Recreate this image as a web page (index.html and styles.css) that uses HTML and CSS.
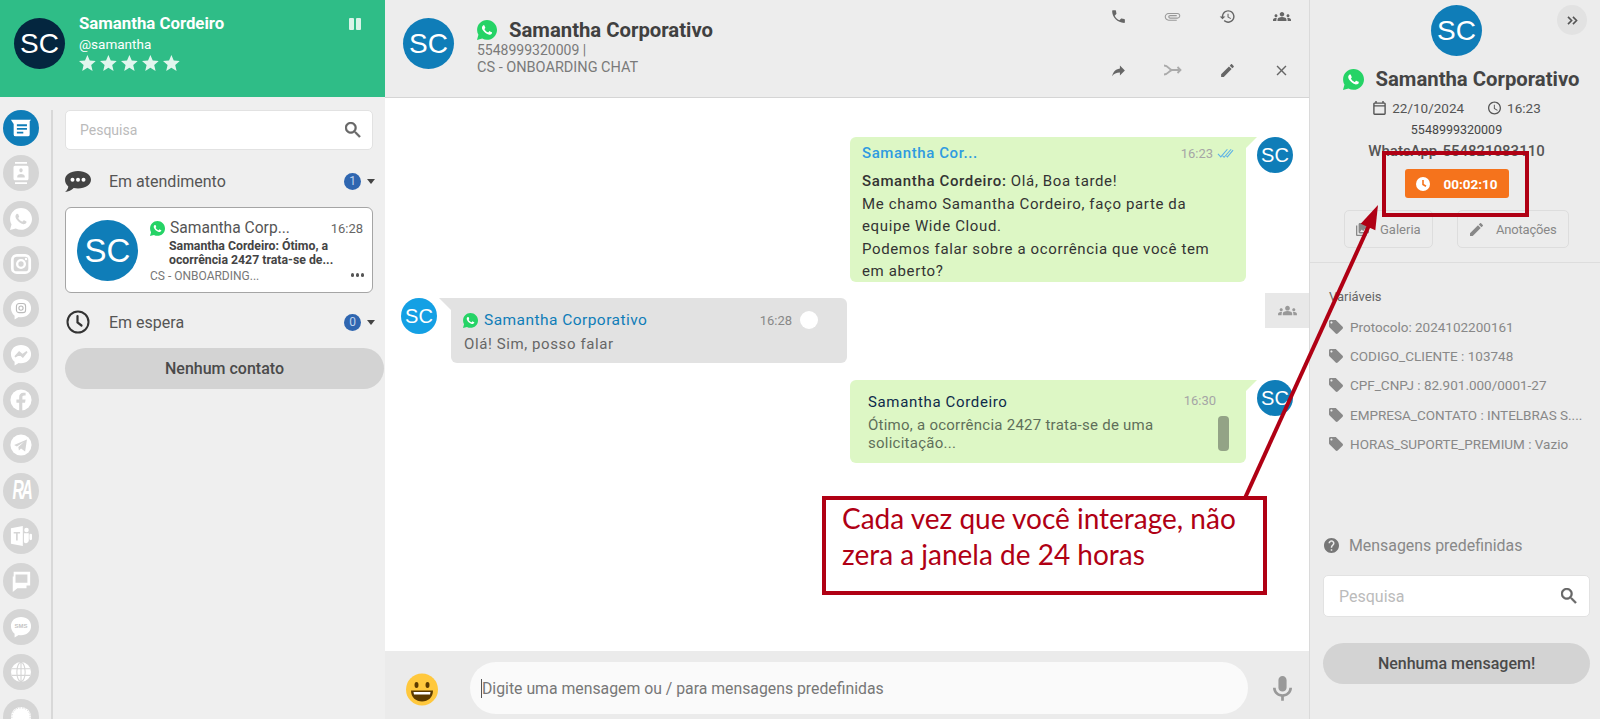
FILE: index.html
```html
<!DOCTYPE html>
<html lang="pt-BR">
<head>
<meta charset="utf-8">
<title>Atendimento</title>
<link rel="stylesheet" href="styles.css">
</head>
<body>
<svg class="defs" xmlns="http://www.w3.org/2000/svg">
  <symbol id="wa" viewBox="0 32 448 448">
    <path fill="#25D366" d="M224 32C101.600 32 2 131.600 2 254c0 39.100 10.200 77.300 29.600 111L0 480l117.700-30.900c32.400 17.700 68.900 27 106.100 27C346 476 448 376 448 254S346 32 224 32z"/>
    <path fill="#fff" d="M325.100 300.500c-5.500-2.800-32.800-16.200-37.900-18-5.100-1.900-8.800-2.800-12.500 2.800-3.700 5.600-14.300 18-17.600 21.800-3.200 3.700-6.500 4.200-12 1.400-32.600-16.300-54-29.100-75.500-66-5.700-9.800 5.700-9.100 16.300-30.300 1.800-3.700.9-6.900-.5-9.700-1.400-2.800-12.500-30.100-17.100-41.200-4.500-10.800-9.100-9.300-12.500-9.500-3.200-.2-6.900-.2-10.600-.2-3.700 0-9.700 1.400-14.800 6.900-5.100 5.600-19.400 19-19.400 46.300 0 27.300 19.900 53.700 22.600 57.400 2.800 3.700 39.100 59.700 94.800 83.800 35.200 15.200 49 16.500 66.600 13.900 10.700-1.600 32.800-13.400 37.400-26.400 4.600-13 4.600-24.100 3.200-26.400-1.300-2.500-5-3.900-10.500-6.600z"/>
  </symbol>
  <symbol id="search" viewBox="3 3 18 18"><path d="M15.500 14h-.79l-.28-.27C15.410 12.590 16 11.110 16 9.500 16 5.910 13.090 3 9.500 3S3 5.910 3 9.500 5.910 16 9.500 16c1.610 0 3.090-.59 4.230-1.570l.27.28v.79l5 4.990L20.490 19l-4.990-5zm-6 0C7.010 14 5 11.990 5 9.500S7.010 5 9.500 5 14 7.010 14 9.500 11.990 14 9.500 14z"/></symbol>
  <symbol id="star" viewBox="2 2 20 19"><path d="M12 17.270L18.180 21l-1.640-7.030L22 9.240l-7.190-.61L12 2 9.190 8.630 2 9.240l5.460 4.730L5.820 21z"/></symbol>
  <symbol id="tag" viewBox="2 2 20 20"><path d="M21.410 11.580l-9-9C12.050 2.220 11.550 2 11 2H4c-1.100 0-2 .9-2 2v7c0 .55.22 1.050.59 1.420l9 9c.36.36.86.58 1.410.58.55 0 1.050-.22 1.410-.59l7-7c.37-.36.59-.86.59-1.410 0-.55-.23-1.060-.59-1.420zM5.500 7C4.670 7 4 6.330 4 5.500S4.670 4 5.500 4 7 4.670 7 5.500 6.330 7 5.500 7z"/></symbol>
  <symbol id="clock" viewBox="2 2 20 20"><path d="M11.990 2C6.470 2 2 6.480 2 12s4.470 10 9.990 10C17.520 22 22 17.520 22 12S17.520 2 11.990 2zM12 20c-4.420 0-8-3.580-8-8s3.580-8 8-8 8 3.580 8 8-3.580 8-8 8zm.5-13H11v6l5.250 3.150.75-1.230-4.500-2.670z"/></symbol>
  <symbol id="groups" viewBox="0 5 24 14"><path d="M12 12.750c1.630 0 3.070.39 4.240.9 1.080.48 1.760 1.560 1.760 2.730V18H6v-1.610c0-1.180.68-2.260 1.760-2.730 1.170-.52 2.610-.91 4.240-.91zM4 13c1.100 0 2-.9 2-2s-.9-2-2-2-2 .9-2 2 .9 2 2 2zm1.130 1.100c-.37-.06-.74-.1-1.130-.1-.99 0-1.930.21-2.780.58C.48 14.900 0 15.620 0 16.430V18h4.500v-1.610c0-.83.23-1.610.63-2.290zM20 13c1.100 0 2-.9 2-2s-.9-2-2-2-2 .9-2 2 .9 2 2 2zm4 3.430c0-.81-.48-1.530-1.220-1.850-.85-.37-1.790-.58-2.780-.58-.39 0-.76.04-1.130.1.4.68.63 1.460.63 2.290V18H24v-1.570zM12 6c1.660 0 3 1.340 3 3s-1.340 3-3 3-3-1.340-3-3 1.340-3 3-3z"/></symbol>
</svg>

<div class="app">
  <aside class="left">
    <header class="me">
      <div class="av av-51 av-navy">SC</div>
      <div class="me-info">
        <div class="me-name">Samantha Cordeiro</div>
        <div class="me-user">@samantha</div>
        <div class="stars">
          <svg class="star"><use href="#star"/></svg><svg class="star"><use href="#star"/></svg><svg class="star"><use href="#star"/></svg><svg class="star"><use href="#star"/></svg><svg class="star"><use href="#star"/></svg>
        </div>
      </div>
      <div class="pause"><span></span><span></span></div>
    </header>
    <div class="left-body">
      <nav class="rail">
        <div class="ch ch-on"><svg class="ic22" viewBox="0 0 24 24"><path fill="#fff" d="M1 3h22l-1.500 1.500V19a2 2 0 0 1-2 2H6a2 2 0 0 1-2-2V7.500z"/><path fill="#0F7DB8" d="M7.500 8h11v2h-11zM7.500 12h11v2h-11zM7.500 16h7v2h-7z"/></svg></div>
        <div class="ch"><svg class="ic-contacts" viewBox="0 0 24 24" preserveAspectRatio="none"><path fill="#fff" d="M20 0H4v2h16V0zM4 24h16v-2H4v2zM20 4H4c-1.100 0-2 .9-2 2v12c0 1.100.9 2 2 2h16c1.100 0 2-.9 2-2V6c0-1.100-.9-2-2-2zm-8 2.750c1.240 0 2.250 1.010 2.250 2.250s-1.010 2.250-2.250 2.250S9.750 10.240 9.750 9 10.760 6.750 12 6.750zM17 17H7v-1.500c0-1.670 3.330-2.500 5-2.500s5 .83 5 2.500V17z"/></svg></div>
        <div class="ch"><svg class="ic22" viewBox="0 32 448 448"><path fill="#fff" d="M224 32C101.600 32 2 131.600 2 254c0 39.100 10.200 77.300 29.600 111L0 480l117.700-30.900c32.400 17.700 68.900 27 106.100 27C346 476 448 376 448 254S346 32 224 32z"/><path fill="#d5d5d5" d="M325.100 300.500c-5.500-2.800-32.800-16.200-37.900-18-5.100-1.900-8.800-2.800-12.500 2.800-3.700 5.600-14.300 18-17.600 21.800-3.200 3.700-6.500 4.200-12 1.400-32.600-16.300-54-29.100-75.500-66-5.700-9.800 5.700-9.100 16.300-30.300 1.800-3.700.9-6.900-.5-9.700-1.400-2.800-12.500-30.100-17.100-41.200-4.500-10.800-9.100-9.300-12.500-9.500-3.200-.2-6.900-.2-10.600-.2-3.700 0-9.700 1.400-14.800 6.900-5.100 5.600-19.400 19-19.400 46.300 0 27.300 19.900 53.700 22.600 57.400 2.800 3.700 39.100 59.700 94.800 83.800 35.200 15.200 49 16.500 66.600 13.900 10.700-1.600 32.800-13.400 37.400-26.400 4.600-13 4.600-24.100 3.200-26.400-1.300-2.500-5-3.900-10.500-6.600z"/></svg></div>
        <div class="ch"><svg class="ic22" viewBox="0 0 24 24"><rect x="2.500" y="2.500" width="19" height="19" rx="5" fill="none" stroke="#fff" stroke-width="3"/><circle cx="12" cy="12" r="4.200" fill="none" stroke="#fff" stroke-width="2.600"/><circle cx="17.500" cy="6.500" r="1.300" fill="#fff"/></svg></div>
        <div class="ch"><svg class="ic22" viewBox="0 0 24 24"><path fill="#fff" d="M12 1c6.600 0 11 4.200 11 10s-4.400 10-11 10c-.9 0-1.700-.1-2.500-.2L5 23.500v-4.200C2.500 17.400 1 14.500 1 11 1 5.200 5.400 1 12 1z"/><rect x="7" y="6" width="10" height="10" rx="3" fill="none" stroke="#bbb" stroke-width="1.200"/><circle cx="12" cy="11" r="2.300" fill="none" stroke="#bbb" stroke-width="1.200"/></svg></div>
        <div class="ch"><svg class="ic22" viewBox="0 0 24 24"><path fill="#fff" d="M12 1c6.600 0 11 4.200 11 10s-4.400 10-11 10c-.9 0-1.700-.1-2.500-.2L5 23.500v-4.200C2.500 17.400 1 14.500 1 11 1 5.200 5.400 1 12 1z"/><path fill="none" stroke="#d5d5d5" stroke-width="1.800" d="M5.500 14l4.500-5 3.500 3 5-3.500-4.500 5.500-3.500-3z"/></svg></div>
        <div class="ch"><svg class="ic22" viewBox="0 0 24 24"><circle cx="12" cy="12" r="11.500" fill="#fff"/><path fill="#d5d5d5" d="M10 24v-9H7v-3.600h3V8.800C10 5.700 11.800 4 14.600 4c1.300 0 2.400.1 2.400.1v3.100h-1.600c-1.400 0-1.900.9-1.900 1.800v2.400H17l-.6 3.600h-3v9z"/></svg></div>
        <div class="ch"><svg class="ic22" viewBox="0 0 24 24"><circle cx="12" cy="12" r="11.500" fill="#fff"/><path fill="#d5d5d5" d="M4.500 12l14-6-2 13-4.500-3.200-2.300 2.200-.6-3.800 6.400-5.700-8 5z"/></svg></div>
        <div class="ch"><span class="ra">RA</span></div>
        <div class="ch"><svg class="ic22" viewBox="0 0 24 24"><path fill="#fff" d="M1 3.500L14 1v22L1 20.500z"/><path fill="#d5d5d5" d="M4 7.500h7v1.800H8.400V17H6.600V9.300H4z"/><circle cx="18" cy="5.500" r="2.500" fill="#fff"/><path fill="#fff" d="M15.200 9h5.300v8a3 3 0 0 1-5.300 1.700z"/><rect x="21.200" y="9.500" width="2.800" height="7" rx="1.400" fill="#fff"/></svg></div>
        <div class="ch"><svg class="ic22" viewBox="0 0 24 24"><path fill="#fff" d="M4 2h18v15h-4v3H8l-5 4V7h1z"/><path fill="#d5d5d5" d="M6 5h13v9H6z"/></svg></div>
        <div class="ch"><svg class="ic22" viewBox="0 0 24 24"><path fill="#fff" d="M12 1c6.600 0 11 4.200 11 10s-4.400 10-11 10c-.9 0-1.700-.1-2.500-.2L5 23.500v-4.200C2.500 17.400 1 14.500 1 11 1 5.200 5.400 1 12 1z"/><text class="sms" x="12" y="13.500" text-anchor="middle">SMS</text></svg></div>
        <div class="ch"><svg class="ic20" viewBox="0 0 24 24"><circle cx="12" cy="12" r="12" fill="#fff"/><g fill="none" stroke="#d5d5d5" stroke-width="1.300"><ellipse cx="12" cy="12" rx="5" ry="11.500"/><path d="M1 8h22M1 16h22M12 0v24"/></g></svg></div>
        <div class="ch"><svg class="ic22" viewBox="0 0 24 24"><circle cx="12" cy="12" r="11" fill="#fff"/><circle cx="12" cy="12" r="10" fill="none" stroke="#d5d5d5" stroke-width="1" stroke-dasharray="1.500 1.500"/></svg></div>
      </nav>
      <div class="list">
        <div class="search search-l"><span class="ph">Pesquisa</span><svg class="ic-search"><use href="#search"/></svg></div>
        <div class="sect sect-a">
          <svg class="sect-ic" viewBox="0 0 26 21"><path fill="#444" d="M13 0c7.200 0 13 3.900 13 8.800s-5.800 8.800-13 8.800c-1.500 0-3-.2-4.300-.5C6.500 19.300 3.500 20.700 0 21c1.800-1.500 3-3.300 3.300-5.600C1.200 13.900 0 11.500 0 8.800 0 3.900 5.800 0 13 0z"/><circle cx="7.500" cy="8.800" r="2" fill="#fff"/><circle cx="13" cy="8.800" r="2" fill="#fff"/><circle cx="18.500" cy="8.800" r="2" fill="#fff"/></svg>
          <span class="sect-t">Em atendimento</span>
          <span class="badge">1</span><span class="caret"></span>
        </div>
        <article class="card">
          <div class="av av-61 av-blue">SC</div>
          <div class="card-b">
            <div class="card-top">
              <svg class="wa15"><use href="#wa"/></svg>
              <span class="card-name">Samantha Corp...</span>
              <span class="card-time">16:28</span>
            </div>
            <div class="card-msg">Samantha Cordeiro: Ótimo, a<br>ocorrência 2427 trata-se de...</div>
            <div class="card-bot"><span>CS - ONBOARDING...</span><span class="dots"><i></i><i></i><i></i></span></div>
          </div>
        </article>
        <div class="sect sect-b">
          <svg class="sect-clock" viewBox="0 0 24 24"><circle cx="12" cy="12" r="10.500" fill="none" stroke="#333" stroke-width="2"/><path fill="none" stroke="#333" stroke-width="2.200" stroke-linecap="round" d="M11.500 6v6.500l4 3"/></svg>
          <span class="sect-t">Em espera</span>
          <span class="badge">0</span><span class="caret"></span>
        </div>
        <div class="empty empty-l">Nenhum contato</div>
      </div>
    </div>
  </aside>

  <main class="chat">
    <header class="chat-head">
      <div class="av av-51 av-blue">SC</div>
      <div class="head-info">
        <div class="head-title"><svg class="wa20"><use href="#wa"/></svg><span>Samantha Corporativo</span></div>
        <div class="head-sub">5548999320009 |<br><span class="head-q">CS - ONBOARDING CHAT</span></div>
      </div>
      <div class="tools">
        <div class="tool"><svg class="tool-ic" viewBox="0 0 24 24"><path d="M6.620 10.790c1.440 2.830 3.760 5.140 6.590 6.590l2.200-2.200c.27-.27.67-.36 1.020-.24 1.120.37 2.330.57 3.570.57.55 0 1 .45 1 1V20c0 .55-.45 1-1 1-9.390 0-17-7.610-17-17 0-.55.45-1 1-1h3.500c.55 0 1 .45 1 1 0 1.250.2 2.450.57 3.570.11.35.03.74-.25 1.020l-2.200 2.200z"/></svg></div>
        <div class="tool"><svg class="tool-ic tool-lt" viewBox="0 0 24 24"><path transform="rotate(90 12 12)" d="M16.500 6v11.500c0 2.210-1.790 4-4 4s-4-1.790-4-4V5c0-1.380 1.120-2.500 2.500-2.500s2.500 1.120 2.500 2.500v10.500c0 .55-.45 1-1 1s-1-.45-1-1V6H10v9.500c0 1.380 1.120 2.500 2.500 2.500s2.500-1.120 2.500-2.500V5c0-2.210-1.790-4-4-4S7 2.790 7 5v12.500c0 3.040 2.460 5.500 5.500 5.500s5.500-2.460 5.500-5.500V6h-1.500z"/></svg></div>
        <div class="tool"><svg class="tool-ic" viewBox="0 0 24 24"><path d="M13 3c-4.970 0-9 4.030-9 9H1l3.890 3.890.07.14L9 12H6c0-3.870 3.130-7 7-7s7 3.130 7 7-3.130 7-7 7c-1.930 0-3.680-.79-4.940-2.060l-1.420 1.420C8.270 19.990 10.510 21 13 21c4.970 0 9-4.030 9-9s-4.030-9-9-9zm-1 5v5l4.280 2.540.72-1.210-3.500-2.080V8H12z"/></svg></div>
        <div class="tool"><svg class="tool-grp"><use href="#groups"/></svg></div>
        <div class="tool"><svg class="tool-ic" viewBox="0 0 24 24"><path d="M14 9V5l7 7-7 7v-4.100c-5 0-8.500 1.600-11 5.100 1-5 4-10 11-11z"/></svg></div>
        <div class="tool"><svg class="tool-merge" viewBox="0 0 24 16"><path fill="none" stroke="#aaa" stroke-width="2.400" d="M0 2c6 0 7 6 11 6h11M0 14c6 0 7-6 11-6M18 4l4 4-4 4"/></svg></div>
        <div class="tool"><svg class="tool-ic" viewBox="0 0 24 24"><path d="M3 17.250V21h3.750L17.810 9.940l-3.750-3.750L3 17.250zM20.710 7.040c.39-.39.39-1.020 0-1.410l-2.340-2.340c-.39-.39-1.020-.39-1.410 0l-1.830 1.830 3.750 3.750 1.830-1.830z"/></svg></div>
        <div class="tool"><svg class="tool-ic" viewBox="0 0 24 24"><path d="M19 6.410L17.590 5 12 10.590 6.410 5 5 6.410 10.590 12 5 17.590 6.410 19 12 13.410 17.590 19 19 17.590 13.410 12z"/></svg></div>
      </div>
    </header>

    <section class="msgs">
      <div class="row row-out row-1">
        <div class="bub bub-out bub-long">
          <div class="bub-top">
            <span class="from-a">Samantha Cor...</span>
            <span class="time-r"><span class="time">16:23</span><svg class="ticks" viewBox="0 0 18 11"><path fill="none" stroke="#5FB3E6" stroke-width="1.200" d="M1 6l3 3 7-8M6 8l1.500 1.500L15 1M10 8l1 1 6-7"/></svg></span>
          </div>
          <div class="bub-text"><b>Samantha Cordeiro:</b> Olá, Boa tarde!<br>Me chamo Samantha Cordeiro, faço parte da<br>equipe Wide Cloud.<br>Podemos falar sobre a ocorrência que você tem<br>em aberto?</div>
        </div>
        <div class="av av-36 av-blue">SC</div>
      </div>
      <div class="row row-in row-2">
        <div class="av av-36 av-sky">SC</div>
        <div class="bub bub-in">
          <div class="bub-top-in">
            <svg class="wa15"><use href="#wa"/></svg>
            <span class="from-b">Samantha Corporativo</span>
            <span class="time time-in">16:28</span>
            <span class="tick-circle"></span>
          </div>
          <div class="in-text">Olá! Sim, posso falar</div>
        </div>
      </div>
      <div class="row row-out row-3">
        <div class="bub bub-out bub-reply">
          <div class="reply-main">
            <div class="reply-top"><span class="from-c">Samantha Cordeiro</span></div>
            <div class="reply-text">Ótimo, a ocorrência 2427 trata-se de uma solicitação...</div>
          </div>
          <div class="reply-side"><span class="time reply-time">16:30</span><span class="reply-bar"></span></div>
        </div>
        <div class="av av-36 av-blue">SC</div>
      </div>
      <div class="side-tab"><svg class="side-grp"><use href="#groups"/></svg></div>
    </section>

    <footer class="composer">
      <svg class="emoji" viewBox="0 0 32 32"><circle cx="16" cy="16" r="16" fill="#FFC83D"/><ellipse cx="10.500" cy="11.500" rx="2" ry="3" fill="#5B3A00"/><ellipse cx="21.500" cy="11.500" rx="2" ry="3" fill="#5B3A00"/><path fill="#5B3A00" d="M5 17h22c0 7-5 11-11 11S5 24 5 17z"/><path fill="#fff" d="M7.500 18.500h17l-.5 2.500H8z"/></svg>
      <div class="composer-input"><span class="cursor"></span><span class="composer-ph">Digite uma mensagem ou / para mensagens predefinidas</span></div>
      <svg class="mic" viewBox="5 2 14 20" preserveAspectRatio="none"><path d="M12 14c1.660 0 3-1.340 3-3V5c0-1.660-1.340-3-3-3S9 3.340 9 5v6c0 1.660 1.340 3 3 3zm5-3c0 2.760-2.240 5-5 5s-5-2.240-5-5H5c0 3.530 2.610 6.430 6 6.920V21h2v-3.080c3.390-.49 6-3.390 6-6.920h-2z"/></svg>
    </footer>
  </main>

  <aside class="right">
    <button class="collapse" type="button"><svg class="collapse-ic" viewBox="0 0 12 10"><path fill="none" stroke="#555" stroke-width="1.800" d="M1 1l4 4-4 4M6.500 1l4 4-4 4"/></svg></button>
    <div class="av av-51 av-blue r-av">SC</div>
    <div class="r-title"><svg class="wa21"><use href="#wa"/></svg><span>Samantha Corporativo</span></div>
    <div class="r-date">
      <svg class="r-ic" viewBox="3 2 18 20"><path d="M19 4h-1V2h-2v2H8V2H6v2H5c-1.100 0-2 .9-2 2v14c0 1.100.9 2 2 2h14c1.100 0 2-.9 2-2V6c0-1.100-.9-2-2-2zm0 16H5V10h14v10zM5 8V6h14v2H5z"/></svg>
      <span class="r-d">22/10/2024</span>
      <svg class="r-ic r-ic-c"><use href="#clock"/></svg>
      <span>16:23</span>
    </div>
    <div class="r-num">5548999320009</div>
    <div class="r-wa">WhatsApp-554821083110</div>
    <div class="timer"><svg class="timer-ic" viewBox="0 0 14 14"><circle cx="7" cy="7" r="7" fill="#fff"/><path fill="none" stroke="#F5731C" stroke-width="1.600" d="M7 3v4.500l3 1.800"/></svg><span>00:02:10</span></div>
    <div class="r-btns">
      <div class="r-btn r-btn-g"><svg class="r-btn-ic" viewBox="2 2 20 20"><path d="M22 16V4c0-1.100-.9-2-2-2H8c-1.100 0-2 .9-2 2v12c0 1.100.9 2 2 2h12c1.100 0 2-.9 2-2zm-11-4l2.030 2.710L16 11l4 5H8l3-4zM2 6v14c0 1.100.9 2 2 2h14v-2H4V6H2z"/></svg><span>Galeria</span></div>
      <div class="r-btn r-btn-a"><svg class="r-btn-ic" viewBox="3 3 18 18"><path d="M3 17.250V21h3.750L17.810 9.940l-3.750-3.750L3 17.250zM20.710 7.040c.39-.39.39-1.020 0-1.410l-2.340-2.340c-.39-.39-1.020-.39-1.410 0l-1.830 1.830 3.750 3.750 1.830-1.830z"/></svg><span class="r-btn-at">Anotações</span></div>
    </div>
    <hr class="r-hr">
    <div class="vars-t">Variáveis</div>
    <ul class="vars">
      <li><svg class="tag"><use href="#tag"/></svg><span>Protocolo: 2024102200161</span></li>
      <li><svg class="tag"><use href="#tag"/></svg><span>CODIGO_CLIENTE : 103748</span></li>
      <li><svg class="tag"><use href="#tag"/></svg><span>CPF_CNPJ : 82.901.000/0001-27</span></li>
      <li><svg class="tag"><use href="#tag"/></svg><span>EMPRESA_CONTATO : INTELBRAS S....</span></li>
      <li><svg class="tag"><use href="#tag"/></svg><span>HORAS_SUPORTE_PREMIUM : Vazio</span></li>
    </ul>
    <div class="pre-t"><svg class="pre-ic" viewBox="2 2 20 20"><path d="M12 2C6.480 2 2 6.480 2 12s4.480 10 10 10 10-4.480 10-10S17.520 2 12 2zm1 17h-2v-2h2v2zm2.070-7.750l-.9.92C13.450 12.900 13 13.500 13 15h-2v-.5c0-1.100.45-2.100 1.170-2.830l1.240-1.260c.37-.36.59-.86.59-1.410 0-1.100-.9-2-2-2s-2 .9-2 2H8c0-2.210 1.790-4 4-4s4 1.790 4 4c0 .88-.36 1.680-.93 2.250z"/></svg><span>Mensagens predefinidas</span></div>
    <div class="search search-r"><span class="ph">Pesquisa</span><svg class="ic-search"><use href="#search"/></svg></div>
    <div class="empty empty-r">Nenhuma mensagem!</div>
  </aside>
</div>

<svg class="arrow" viewBox="0 0 1600 719"><line x1="1245" y1="498" x2="1371" y2="221" stroke="#B00014" stroke-width="4"/><polygon points="1378,205 1360.700,223.700 1375.300,230.300" fill="#B00014"/></svg>
<div class="red-box"></div>
<div class="note">Cada vez que você interage, não<br>zera a janela de 24 horas</div>
</body>
</html>
```
FILE: styles.css
```css
* { box-sizing: border-box; }
html, body { margin: 0; height: 719px; overflow: hidden; }
body { font-family: Roboto, sans-serif; color: #444; background: #fff; position: relative; }
.defs { display: none; }
.app { display: flex; height: 719px; }

.av { border-radius: 50%; color: #fff; font-family: "Liberation Sans", sans-serif; display: flex; align-items: center; justify-content: center; flex: none; }
.av-51 { width: 51px; height: 51px; font-size: 28px; }
.av-61 { width: 61px; height: 61px; font-size: 33px; }
.av-36 { width: 36px; height: 36px; font-size: 20px; }
.av-navy { background: #04263F; }
.av-blue { background: #0F7DB8; }
.av-sky { background: #14A0E4; }

/* left */
.left { width: 385px; flex: none; display: flex; flex-direction: column; background: #EFEFEF; }
.me { height: 97px; flex: none; background: #2FBD87; display: flex; padding: 18px 24px 0 14px; color: #fff; }
.me-info { margin-left: 14px; flex: 1; }
.me-name { font-size: 16.800px; font-weight: 700; line-height: 12px; margin-top: -1px; }
.me-user { font-size: 13.500px; line-height: 16px; margin-top: 7px; }
.stars { display: flex; gap: 4.200px; margin-top: 3px; }
.star { width: 16.800px; height: 16px; fill: #E2F6EE; }
.pause { display: flex; gap: 2px; height: 12px; }
.pause span { width: 5px; height: 12px; background: #D9F3E8; border-radius: 1px; }
.left-body { flex: 1; display: flex; padding-top: 13px; min-height: 0; }
.rail { width: 53px; flex: none; border-right: 2px solid #D8D8D8; padding-left: 3px; display: flex; flex-direction: column; gap: 9.330px; overflow: hidden; }
.ch { width: 36px; height: 36px; flex: none; border-radius: 50%; background: #D5D5D5; display: flex; align-items: center; justify-content: center; overflow: hidden; }
.ch-on { background: #0F7DB8; }
.ic22 { width: 22px; height: 22px; }
.ic20 { width: 20px; height: 20px; }
.ic-contacts { width: 18px; height: 22px; }
.ra { color: #fff; font-family: "Liberation Sans", sans-serif; font-weight: 700; font-style: italic; font-size: 27px; letter-spacing: -4px; transform: scaleX(.58); flex: none; }
.sms { font-family: "Liberation Sans", sans-serif; font-size: 6.500px; font-weight: 700; fill: #c4c4c4; }

.list { flex: 1; padding-left: 12px; min-width: 0; }
.search { background: #fff; border: 1px solid #E2E2E2; border-radius: 5px; display: flex; align-items: center; justify-content: space-between; }
.search-l { width: 308px; height: 40px; padding: 0 11px 0 14px; }
.ph { font-size: 14px; color: #BBB; }
.ic-search { width: 16px; height: 16px; fill: #666; stroke: #666; stroke-width: .5px; }
.sect { width: 310px; display: flex; align-items: center; height: 24px; }
.sect-a { margin-top: 19px; }
.sect-b { margin-top: 17px; }
.sect-ic { width: 26px; height: 21px; flex: none; }
.sect-clock { width: 24px; height: 24px; margin-left: 1px; flex: none; }
.sect-t { font-size: 16px; color: #555; margin-left: 18px; flex: 1; }
.sect-b .sect-t { margin-left: 19px; }
.badge { width: 17px; height: 17px; border-radius: 50%; background: #2F66B0; color: #BFD3EE; font-size: 12px; display: flex; align-items: center; justify-content: center; flex: none; }
.caret { width: 0; height: 0; border-left: 4.500px solid transparent; border-right: 4.500px solid transparent; border-top: 5px solid #444; margin-left: 6px; flex: none; }
.card { width: 308px; height: 86px; margin-top: 14px; background: #fff; border: 1px solid #A5A5A5; border-radius: 6px; padding: 12px 0 0 11px; display: flex; }
.card-b { margin-left: 12px; flex: 1; min-width: 0; padding-right: 1px; }
.card-top { display: flex; align-items: center; height: 16px; }
.wa15 { width: 15px; height: 15px; flex: none; }
.card-name { font-size: 15.600px; color: #555; margin-left: 5px; flex: 1; }
.card-time { font-size: 13px; color: #666; padding-right: 8px; }
.card-msg { font-size: 12.300px; font-weight: 700; color: #444; line-height: 14px; margin: 3px 0 0 19px; }
.card-bot { display: flex; justify-content: space-between; align-items: center; font-size: 12px; color: #777; margin-top: 1px; height: 16px; padding-right: 7px; }
.dots { display: flex; gap: 1.500px; margin-bottom: 2px; }
.dots i { width: 3.500px; height: 3.500px; border-radius: 50%; background: #555; }
.empty { background: #D3D3D3; border-radius: 21px; font-size: 16px; font-weight: 500; color: #4A4A4A; display: flex; align-items: center; justify-content: center; }
.empty-l { width: 319px; height: 41px; margin-top: 14px; }

/* chat */
.chat { flex: 1; min-width: 0; display: flex; flex-direction: column; }
.chat-head { height: 98px; flex: none; background: #EDEDED; border-bottom: 1px solid #D5D5D5; display: flex; padding: 18px 0 0 18px; }
.head-info { margin-left: 23px; flex: 1; }
.head-title { display: flex; align-items: center; font-size: 20.300px; font-weight: 700; color: #404040; height: 24px; }
.wa20 { width: 20px; height: 20px; margin-right: 12px; flex: none; }
.head-sub { font-size: 14px; line-height: 17px; color: #7A7A7A; }
.head-q { font-size: 14.500px; }
.tools { display: grid; grid-template-columns: repeat(4, 54.500px); grid-template-rows: 32px 32px; row-gap: 22px; margin-top: -18px; height: 86px; flex: none; }
.tool { display: flex; align-items: center; justify-content: center; }
.tool-ic { width: 17px; height: 17px; fill: #666; }
.tool-lt { fill: #999; }
.tool-grp { width: 18px; height: 11px; fill: #666; margin-top: 1px; }
.tool-merge { width: 18px; height: 12px; }
.msgs { flex: 1; min-height: 0; background: #fff; padding: 39px 16px 0; position: relative; }
.row { display: flex; }
.row-out { justify-content: flex-end; }
.row-2 { margin-top: 16px; }
.row-3 { margin-top: 17px; }
.bub { position: relative; }
.bub-out { width: 396px; background: #DDF7C5; margin-right: 11px; border-radius: 6px 0 6px 6px; }
.bub-out::after { content: ""; position: absolute; top: 0; right: -11px; border-top: 11px solid #DDF7C5; border-right: 11px solid transparent; }
.bub-in { width: 396px; height: 65px; background: #E2E2E2; margin-left: 14px; border-radius: 0 6px 6px 6px; padding: 14px 0 0 12px; }
.bub-in::before { content: ""; position: absolute; top: 0; left: -12px; border-top: 12px solid #E2E2E2; border-left: 12px solid transparent; }
.bub-long { height: 145px; padding: 5px 12px 0 12px; }
.bub-top { display: flex; justify-content: space-between; align-items: center; height: 22px; }
.from-a { font-size: 15px; font-weight: 500; color: #2F9BE0; letter-spacing: .6px; }
.time-r { display: flex; align-items: center; }
.time { font-size: 13px; color: #A5A5A5; }
.time-r .time { margin-right: -1px; }
.ticks { width: 17px; height: 11px; margin-left: 5px; }
.bub-text { font-size: 15px; line-height: 22.600px; color: #333; letter-spacing: .63px; margin-top: 6px; white-space: nowrap; }
.bub-text b { font-weight: 500; }
.bub-top-in { display: flex; align-items: center; height: 16px; }
.from-b { font-size: 15.500px; color: #0F7DB8; margin-left: 6px; letter-spacing: .45px; flex: 1; }
.time-in { color: #888; }
.tick-circle { width: 18px; height: 18px; background: #fff; border-radius: 50%; margin: 0 29px 0 8px; flex: none; }
.in-text { font-size: 15px; color: #666; letter-spacing: .6px; margin: 6px 0 0 1px; line-height: 20px; }
.bub-reply { height: 83px; display: flex; padding: 13px 17px 0 18px; }
.reply-main { flex: 1; min-width: 0; }
.reply-top { height: 18px; display: flex; align-items: center; }
.from-c { font-size: 15px; color: #0D2A4A; letter-spacing: .65px; }
.reply-text { font-size: 15px; line-height: 18px; color: #5F6F5A; letter-spacing: .25px; margin-top: 5px; width: 310px; }
.reply-side { display: flex; flex-direction: column; align-items: flex-end; width: 50px; flex: none; }
.reply-time { margin-right: 13px; }
.reply-bar { width: 11px; height: 35px; background: #93A386; border-radius: 4px; margin-top: 8px; }
.side-tab { position: absolute; right: 0; top: 195px; width: 44px; height: 35px; background: #E8E8E8; display: flex; align-items: center; justify-content: center; }
.side-grp { width: 19px; height: 11px; fill: #999; }
.composer { height: 68px; flex: none; background: #EBEBEB; display: flex; padding: 11px 0 0 21px; }
.emoji { width: 32px; height: 33px; margin-top: 11px; flex: none; }
.composer-input { width: 778px; height: 52px; background: #FAFAFA; border-radius: 26px; margin-left: 32px; display: flex; align-items: center; padding-left: 11px; }
.cursor { width: 1px; height: 19px; background: #555; }
.composer-ph { font-size: 15.800px; color: #777; }
.mic { width: 19px; height: 26px; fill: #999; margin: 14px 0 0 25px; flex: none; }

/* right */
.right { width: 291px; flex: none; background: #ECECEC; border-left: 1px solid #DADADA; padding: 5px 10px 0 13px; position: relative; display: flex; flex-direction: column; }
.collapse { position: absolute; top: 5px; right: 13px; width: 30px; height: 30px; border: 0; padding: 0; border-radius: 50%; background: #E2E2E2; display: flex; align-items: center; justify-content: center; }
.collapse-ic { width: 11px; height: 9px; }
.r-av { align-self: center; }
.r-title { display: flex; align-items: center; justify-content: center; font-size: 20.300px; font-weight: 700; color: #444; height: 24px; margin-top: 11px; padding-left: 9px; white-space: nowrap; }
.wa21 { width: 21px; height: 21px; margin-right: 12px; flex: none; }
.r-date { display: flex; align-items: center; justify-content: center; font-size: 13.500px; color: #555; height: 18px; margin-top: 8px; padding-left: 1px; }
.r-ic { width: 13px; height: 14px; fill: #555; margin-right: 6px; }
.r-ic-c { margin-left: 24px; }
.r-num { font-size: 12.500px; text-align: center; color: #444; height: 14px; line-height: 14px; margin-top: 6px; }
.r-wa { font-size: 15px; font-weight: 500; text-align: center; color: #555; height: 18px; line-height: 18px; margin-top: 5px; white-space: nowrap; }
.timer { width: 104px; height: 29px; background: #F5731C; border-radius: 3px; align-self: center; margin-top: 9px; display: flex; align-items: center; color: #fff; font-size: 13.500px; font-weight: 700; padding-left: 11px; gap: 14px; }
.timer-ic { width: 14px; height: 14px; }
.r-btns { display: flex; justify-content: center; gap: 24px; margin-top: 12px; }
.r-btn { height: 38px; border: 1px solid #DDD; border-radius: 5px; display: flex; align-items: center; font-size: 13px; color: #888; }
.r-btn-g { width: 89px; padding-left: 11px; gap: 11px; }
.r-btn-a { width: 112px; padding-left: 12px; gap: 13px; }
.r-btn-at { letter-spacing: -.2px; }
.r-btn-ic { width: 13px; height: 13px; fill: #888; flex: none; }
.r-hr { border: 0; border-top: 1px solid #DDD; margin: 14px 0 0 -13px; width: 290px; height: 0; }
.vars-t { font-size: 13px; color: #666; margin: 26px 0 0 6px; height: 16px; line-height: 16px; }
.vars { list-style: none; margin: 7px 0 0 6px; padding: 0; }
.vars li { height: 29.300px; display: flex; align-items: center; font-size: 13.500px; color: #888; white-space: nowrap; }
.tag { width: 14px; height: 14px; fill: #888; margin-right: 7px; flex: none; }
.pre-t { display: flex; align-items: center; font-size: 15.900px; color: #888; height: 24px; margin-top: 75px; padding-left: 1px; }
.pre-ic { width: 15px; height: 15px; fill: #777; margin-right: 10px; }
.search-r { height: 42px; margin-top: 18px; padding: 0 12px 0 15px; }
.search-r .ph { font-size: 16px; }
.empty-r { height: 41px; margin-top: 26px; }

/* annotations drawn over the screenshot */
.arrow { position: absolute; left: 0; top: 0; width: 1600px; height: 719px; pointer-events: none; }
.red-box { position: absolute; left: 1382px; top: 151px; width: 147px; height: 66px; border: 4px solid #B00014; }
.note { position: absolute; left: 822px; top: 496px; width: 445px; height: 99px; background: #fff; border: 4px solid #B00014; font-family: Lato, sans-serif; font-size: 28px; line-height: 36px; color: #B00014; padding: 0 0 0 16px; white-space: nowrap; }
```
